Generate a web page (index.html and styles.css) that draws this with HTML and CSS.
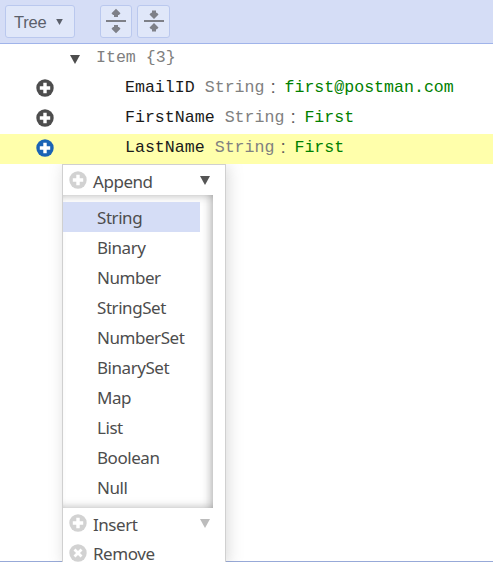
FILE: index.html
```html
<!DOCTYPE html>
<html lang="en">
<head>
<meta charset="utf-8">
<title>Item editor</title>
<link rel="stylesheet" href="styles.css">
</head>
<body>
<svg class="defs" aria-hidden="true">
  <symbol id="plus" viewBox="0 0 18 18"><circle cx="9" cy="9" r="8.7" fill="currentColor"/><path d="M7.300 3.800h3.400v3.500h3.500v3.400h-3.500v3.500H7.300v-3.500H3.800V7.300h3.500z" fill="#fff"/></symbol>
  <symbol id="cross" viewBox="0 0 18 18"><circle cx="9" cy="9" r="8.7" fill="currentColor"/><path d="M5.500 5.500l7 7M12.500 5.500l-7 7" stroke="#fff" stroke-width="2.800"/></symbol>
  <symbol id="down" viewBox="0 0 10 9"><path d="M0 0h10L5 9z" fill="currentColor"/></symbol>
</svg>
<div class="editor">
  <header class="toolbar">
    <button class="mode">Tree<svg class="mode-arrow"><use href="#down"/></svg></button>
    <button class="tool expand"><svg width="22" height="26" viewBox="0 0 22 26"><path d="M1 12h20v2H1zM11 .8l4.500 4.500-1.500 1.700H13V9H9V7H8L6.500 5.300zM11 25.200l4.500-4.500L14 19H13V17H9v2H8l-1.500 1.700z" fill="#7e8088"/></svg></button>
    <button class="tool collapse"><svg width="22" height="26" viewBox="0 0 22 26"><path d="M1 12h20v2H1zM11 11l4.500-4.500L14 4.800H13V2.500H9v2.300H8L6.500 6.500zM11 15l4.500 4.500-1.500 1.700H13v2.300H9v-2.300H8l-1.500-1.700z" fill="#7e8088"/></svg></button>
  </header>
  <main class="tree">
    <div class="row root"><svg class="toggle"><use href="#down"/></svg><span class="type">Item {3}</span></div>
    <div class="row"><svg class="action"><use href="#plus"/></svg><span class="field">EmailID</span><span class="type">String</span><span class="colon">:</span><span class="value">first@postman.com</span></div>
    <div class="row"><svg class="action"><use href="#plus"/></svg><span class="field">FirstName</span><span class="type">String</span><span class="colon">:</span><span class="value">First</span></div>
    <div class="row selected"><svg class="action"><use href="#plus"/></svg><span class="field">LastName</span><span class="type">String</span><span class="colon">:</span><span class="value">First</span></div>
  </main>
  <nav class="menu">
    <div class="menu-row"><svg class="menu-icon"><use href="#plus"/></svg><span>Append</span><svg class="menu-arrow open"><use href="#down"/></svg></div>
    <ul class="submenu">
      <li class="current">String</li>
      <li>Binary</li>
      <li>Number</li>
      <li>StringSet</li>
      <li>NumberSet</li>
      <li>BinarySet</li>
      <li>Map</li>
      <li>List</li>
      <li>Boolean</li>
      <li>Null</li>
    </ul>
    <div class="menu-row"><svg class="menu-icon"><use href="#plus"/></svg><span>Insert</span><svg class="menu-arrow"><use href="#down"/></svg></div>
    <div class="menu-row"><svg class="menu-icon"><use href="#cross"/></svg><span>Remove</span></div>
  </nav>
</div>
</body>
</html>
```
FILE: styles.css
```css
* { box-sizing: border-box; }
body { margin: 0; background: #fff; }
svg { flex: none; display: block; }
.defs { position: absolute; width: 0; height: 0; }
.editor { position: relative; height: 562px; border-bottom: 1px solid #97a9d8; }
.toolbar { display: flex; height: 44px; padding: 5px 0 0 5px; background: #d5ddf6; border-bottom: 1px solid #a0b4ea; }
button { height: 33px; padding: 0; display: flex; align-items: center; border: 1px solid #bac8ee; border-radius: 3px; background: #e0e7f9; }
.mode { width: 70px; padding: 1px 0 0 8px; font: 16.500px "Liberation Sans", Arial, sans-serif; letter-spacing: -.2px; color: #5b606b; }
.mode-arrow { width: 7px; height: 6px; margin-left: 9px; }
.tool { width: 32px; padding-bottom: 1px; justify-content: center; }
.expand { margin-left: 25px; }
.collapse { margin-left: 5px; width: 33px; }
.row { display: flex; align-items: center; height: 30px; font: 16.600px/30px "Liberation Mono", "Courier New", monospace; white-space: pre; }
.row > span { position: relative; top: -1px; }
.root { padding-left: 70px; }
.toggle { width: 10px; height: 9px; margin-right: 16px; color: #4d4d4d; }
.action { width: 18px; height: 18px; margin: -2px 71px 0 36px; color: #4d4d4d; }
.field { color: #1a1a1a; margin-right: 10px; }
.type { color: #808080; }
.row > .colon { top: -2px; width: 20px; padding-left: 6px; font-family: "Liberation Sans", Arial, sans-serif; font-size: 19px; color: #606060; }
.value { color: #008000; }
.selected { background: #ffffab; }
.selected .action { color: #1a63b5; }
.menu { position: absolute; left: 62px; top: 164px; width: 164px; height: 399px; clip-path: inset(0 -20px 0 -20px); background: #fff; border: 1px solid #d0d0d0; border-bottom: 0; box-shadow: 2px 2px 14px rgba(128, 128, 128, .3); font: 17px/22px "Noto Sans", sans-serif; letter-spacing: -.45px; color: #4d4d4d; }
.menu-row { display: flex; align-items: center; height: 30px; padding-left: 6px; }
.menu-row:last-child { height: 28px; padding-bottom: 0; }
.menu-row:last-child svg { margin-top: 2px; }
.menu-row span { width: 107px; margin-left: 6px; padding-top: 3px; line-height: 15px; }
.menu-icon { width: 18px; height: 18px; color: #d2d2d2; }
.menu-arrow { width: 10px; height: 9px; color: #bcbcbc; }
.menu-arrow.open { color: #555; }
.submenu { width: 150px; height: 313px; margin: 0; padding: 7px 13px 0 0; list-style: none; box-shadow: inset -10px 0 10px -8px rgba(128, 128, 128, .6), inset 0 8px 10px -8px rgba(128, 128, 128, .6), inset 0 -8px 10px -8px rgba(128, 128, 128, .6); }
.submenu li { height: 30px; padding: 5px 0 0 34px; }
.submenu .current { background: #d5ddf6; }
```
